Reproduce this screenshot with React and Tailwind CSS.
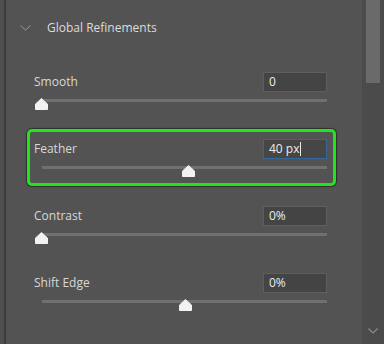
import React from "react";

const rows = [
  { label: "Smooth", value: "0", thumb: 1 },
  { label: "Feather", value: "40 px", thumb: 148, active: true },
  { label: "Contrast", value: "0%", thumb: 1 },
  { label: "Shift Edge", value: "0%", thumb: 145 },
];

const Thumb = ({ left }) => (
  <svg
    className="absolute top-[-1px]"
    style={{ left }}
    width="13"
    height="12"
    viewBox="0 0 13 12"
  >
    <path d="M6.5 0.5 L12.5 6 V11.5 H0.5 V6 Z" fill="#f2f2f2" strokeLinejoin="round" stroke="#f2f2f2" strokeWidth="1" />
  </svg>
);

const Row = ({ label, value, thumb, active }) => (
  <div
    className={`ml-[21px] mr-[26px] h-[57px] rounded-[5px] border-[3px] pl-[4px] pr-[6px] pt-[7px] ${
      active
        ? "border-[#1fe41f] shadow-[0_0_1px_1px_rgba(0,0,0,0.45)]"
        : "border-transparent"
    }`}
  >
    <div className="flex h-[20px] items-center justify-between">
      <span className="text-[12px] text-[#d8d8d8]">{label}</span>
      <div
        className={`flex h-[20px] w-[64px] items-center border pl-[5px] text-[12px] text-[#ececec] ${
          active ? "border-[#36679c] bg-[#464646]" : "border-[#5e5e5e] bg-[#444444]"
        }`}
      >
        {value}
        {active && <span className="ml-px h-[14px] w-px bg-[#e8e8e8]" />}
      </div>
    </div>
    <div className="relative mt-[7px] ml-[8px] h-[12px]">
      <div className="h-[3px] w-full bg-[#707070]" />
      <Thumb left={thumb - 8} />
    </div>
  </div>
);

export default function App() {
  return (
    <div
      className="flex h-[344px] w-[384px] overflow-hidden bg-[#535353]"
      style={{ fontFamily: '"Open Sans", "Noto Sans", sans-serif' }}
    >
      <div className="w-[4px] bg-[#505050]" />
      <div className="w-[2px] bg-[#3b3b3b]" />

      <div className="flex-1">
        {/* section header */}
        <div className="flex h-[54px] items-center pl-[14px] pt-[1px]">
          <svg width="11" height="6" viewBox="0 0 11 6" className="mt-[1px]">
            <path d="M0.5 0.5 L5.5 5 L10.5 0.5" fill="none" stroke="#9c9c9c" strokeWidth="1" />
          </svg>
          <span className="ml-[16px] text-[12px] text-[#dcdcdc]">
            Global Refinements
          </span>
        </div>

        <div className="flex flex-col gap-[10px] pt-[8px]">
          {rows.map((r) => (
            <Row key={r.label} {...r} />
          ))}
        </div>
      </div>

      {/* scrollbar */}
      <div className="relative flex w-[22px] flex-col bg-[#4b4b4b] pl-[4px] pr-[4px]">
        <div className="h-[83px] w-[14px] bg-[#6a6a6a]" />
        <svg
          width="10"
          height="6"
          viewBox="0 0 10 6"
          className="absolute bottom-[10px] left-[6px]"
        >
          <path d="M0.5 0.5 L5 5 L9.5 0.5" fill="none" stroke="#8c8c8c" strokeWidth="1.2" />
        </svg>
      </div>
    </div>
  );
}
